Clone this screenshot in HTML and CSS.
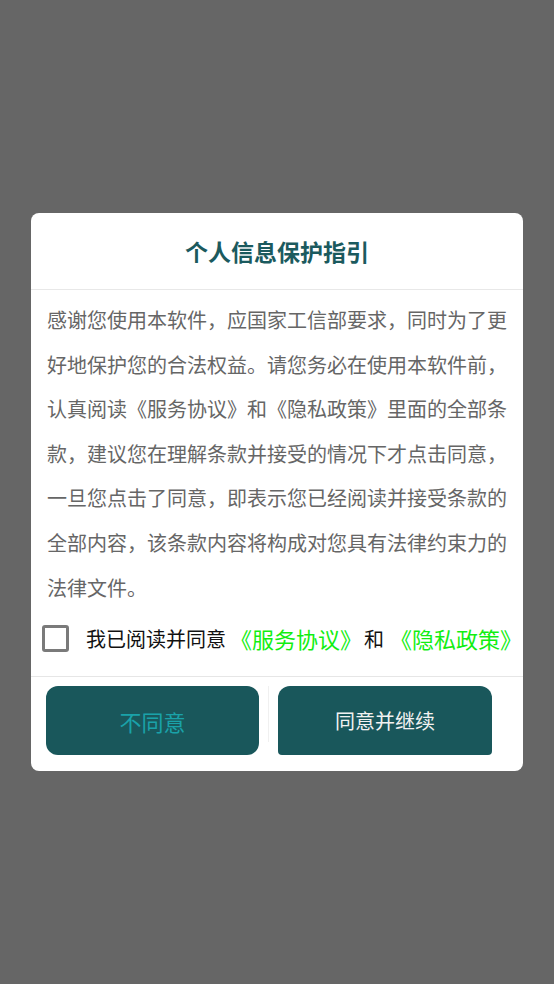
FILE: index.html
```html
<!DOCTYPE html>
<html lang="zh-CN">
<head>
<meta charset="utf-8">
<title>个人信息保护指引</title>
<link rel="stylesheet" href="styles.css">
</head>
<body>
<div class="overlay">
  <div class="dialog">
    <div class="title">个人信息保护指引</div>
    <div class="content">感谢您使用本软件，应国家工信部要求，同时为了更好地保护您的合法权益。请您务必在使用本软件前，认真阅读《服务协议》和《隐私政策》里面的全部条款，建议您在理解条款并接受的情况下才点击同意，一旦您点击了同意，即表示您已经阅读并接受条款的全部内容，该条款内容将构成对您具有法律约束力的法律文件。</div>
    <div class="agree">
      <span class="box"></span>
      <span class="agree-text">我已阅读并同意</span>
      <span class="link link-1">《服务协议》</span>
      <span class="and">和</span>
      <span class="link link-2">《隐私政策》</span>
    </div>
    <div class="actions">
      <div class="btn btn-no">不同意</div>
      <div class="sep"></div>
      <div class="btn btn-yes">同意并继续</div>
    </div>
  </div>
</div>
</body>
</html>
```
FILE: styles.css
```css
html, body {
  margin: 0;
  padding: 0;
}
body {
  background: #666666;
  font-family: "Noto Sans CJK SC", "Noto Sans", sans-serif;
}
.overlay {
  height: 984px;
  display: flex;
  align-items: center;
  justify-content: center;
}
.dialog {
  width: 492px;
  height: 558px;
  background: #ffffff;
  border-radius: 8px;
  overflow: hidden;
  display: flex;
  flex-direction: column;
}
.title {
  height: 76px;
  line-height: 76px;
  text-align: center;
  font-size: 23px;
  font-weight: bold;
  color: #1b5a5e;
  border-bottom: 1px solid #e8e8e8;
  flex: none;
}
.content {
  padding: 8px 16px 0;
  font-size: 20px;
  line-height: 44.6px;
  color: #666666;
  word-break: break-all;
}
.agree {
  margin-top: 4px;
  height: 48px;
  display: flex;
  align-items: center;
  padding-left: 11px;
  white-space: nowrap;
  border-bottom: 1px solid #e6e6e6;
  padding-bottom: 14px;
  flex: none;
}
.box {
  width: 21px;
  height: 21px;
  border: 3px solid #7a7a7a;
  border-radius: 3px;
  flex: none;
}
.agree-text {
  margin-left: 17px;
  font-size: 20px;
  color: #111111;
}
.link {
  font-size: 22px;
  color: #11ee11;
}
.link-1 {
  margin-left: 4px;
}
.and {
  margin-left: 2px;
  font-size: 20px;
  color: #111111;
}
.link-2 {
  margin-left: 6px;
}
.actions {
  display: flex;
  align-items: flex-start;
  padding: 9px 31px 0 15px;
  flex: none;
}
.btn {
  height: 69px;
  width: 213px;
  display: flex;
  align-items: center;
  justify-content: center;
  background: #19575b;
  flex: none;
}
.btn-no {
  border-radius: 12px;
  font-size: 22px;
  color: #1aa2a9;
}
.btn-yes {
  width: 214px;
  border-radius: 12px 12px 4px 4px;
  font-size: 20px;
  color: #f2f2f2;
}
.sep {
  width: 1px;
  height: 56px;
  margin: 0 9px;
  background: #f0f0f0;
}
```
